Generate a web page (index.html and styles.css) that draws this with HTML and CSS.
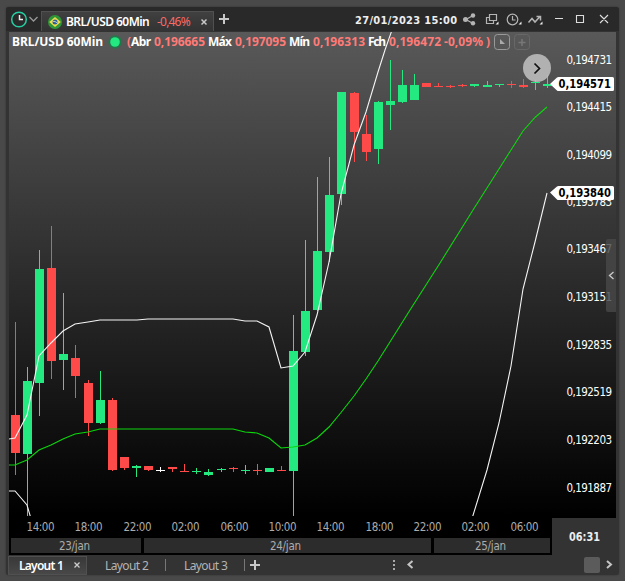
FILE: index.html
```
<!DOCTYPE html>
<html lang="pt">
<head>
<meta charset="utf-8">
<title>BRL/USD 60Min</title>
<link rel="stylesheet" href="styles.css">
</head>
<body>
<main class="window">
  <header class="titlebar">
    <svg class="clock" width="34" height="24" viewBox="6 8 34 24" fill="none">
      <circle cx="19" cy="20.500" r="7.300" stroke="#25cda3" stroke-width="1.500"/>
      <path d="M19.500 16v4.500H23" stroke="#eee" stroke-width="1.500"/>
      <path d="M29.500 18l4 4 4-4" stroke="#999" stroke-width="1.300"/>
    </svg>
    <div class="symbol-tab">
      <svg class="flag" width="14" height="14" viewBox="0 0 14 14">
        <circle cx="7" cy="7" r="7" fill="#2f9638"/>
        <path d="M7 2L12.800 7 7 12 1.200 7z" fill="#f0dc4a"/>
        <circle cx="7" cy="7" r="2.500" fill="#315f9c"/>
        <path d="M4.800 6.300q2.500-.3 4.400 1.600" stroke="#dce8d8" stroke-width=".8" fill="none"/>
      </svg>
      <span class="symbol">BRL/USD 60Min</span>
      <span class="change">-0,46%</span>
      <svg class="tab-close" width="8" height="8" viewBox="0 0 8 8"><path d="M1.500 1.500l5 5m0-5l-5 5" stroke="#c8c8c8" stroke-width="1.500"/></svg>
    </div>
    <svg class="add" width="12" height="12" viewBox="0 0 12 12"><path d="M6 1v10M1 6h10" stroke="#c8c8c8" stroke-width="2"/></svg>
    <span class="date">27/01/2023 15:00</span>
    <svg class="tools" width="155" height="24" viewBox="461 7 155 24" fill="none" stroke="#b4b4b4" stroke-width="1.200">
      <path d="M473 15.500l-7 4 7 4"/>
      <g fill="#b4b4b4" stroke="none"><circle cx="473" cy="15.500" r="2.200"/><circle cx="465.500" cy="19.500" r="2.500"/><circle cx="473" cy="23.200" r="2.200"/></g>
      <path d="M489.500 14.500h7v6h-7zM489.500 17.500h-3v6h7v-3"/>
      <circle cx="512.500" cy="19.500" r="5.300"/><path d="M512.500 16v4h3"/>
      <path d="M528.500 22.500l3.500-4 3 3.500 5-5.500M536.500 16.500h4v4" stroke-width="1.500"/>
      <path d="M498.500 21.500v3h-3zM521.500 21.500v3h-3zM542.500 21.500v3h-3z" fill="#eee" stroke="none"/>
      <path d="M555 18.500h8M576.500 15.500h7v7h-7zM600 15l8 8m0-8l-8 8" stroke="#ddd" stroke-width="1.100"/>
    </svg>
  </header>
  <svg class="chart" width="610" height="524" viewBox="9 31 610 524">
    <defs>
      <linearGradient id="sky" x1="0" y1="0" x2="0" y2="1"><stop stop-color="#595959"/><stop offset="1" stop-color="#000"/></linearGradient>
      <clipPath id="plot"><path d="M9 32h607v484H9z"/></clipPath>
    </defs>
    <path fill="#333" d="M9 31h610v524H9z"/>
    <path fill="url(#sky)" d="M9 32h607v484H9z"/>
    <path fill="#000" d="M9 516h607v2h-64v37H9z"/>
    <path fill="#2c2c2c" d="M11 538h130v15H11zM144 538h287v15H144zM434 538h116v15H434z"/>
    <g id="candles" shape-rendering="crispEdges"></g>
    <g class="bands" clip-path="url(#plot)">
      <polyline points="9,439 15,438 27,415 39,356 51,343 63,331 75,324 88,322 100,320 137,320 148,319 233,319 245,321 257,321 269,327 281,368 293,366 305,352 317,315 329,262 341,194 354,145 366,112 378,72 385,50 392,30"/>
      <polyline points="9,491 15,491 27,505 30.500,517"/>
      <polyline points="472.500,517 487,470 499,423 511,366 523,289 535,242 547,193"/>
      <polyline class="mid" points="9,465 15,465 27,460 39,450 51,445 63,439 75,434 88,432 100,429 233,429 245,432 257,433 269,438 281,448 293,447 305,445 317,438 329,427 341,412.500 354,396 366,379 378,361 410,310 440,263 473,210 487,188 511,150 523,131 535,117.500 547,107"/>
    </g>
    <g class="legend">
      <text x="12" y="46" textLength="91">BRL/USD 60Min</text>
      <circle cx="115" cy="42" r="6.700" fill="#26744b"/><circle cx="115" cy="42" r="4.800" fill="#24e880"/>
      <text class="neg" x="127" y="46">(</text><text x="131" y="46" textLength="20">Abr</text>
      <text class="neg" x="154" y="46" textLength="51">0,196665</text><text x="208" y="46" textLength="24">Máx</text>
      <text class="neg" x="235" y="46" textLength="51">0,197095</text><text x="289" y="46" textLength="21">Mín</text>
      <text class="neg" x="313" y="46" textLength="52">0,196313</text><text x="368" y="46" textLength="18">Fch</text>
      <text class="neg" x="389" y="46" textLength="52">0,196472</text><text class="neg" x="444" y="46" textLength="39">-0,09%</text><text class="neg" x="486" y="46">)</text>
    </g>
    <rect x="494.500" y="34.500" width="15" height="15" rx="3" fill="none" stroke="#999"/>
    <path d="M500 39v5h5z" fill="#aaa"/>
    <rect x="514.500" y="34.500" width="15" height="15" rx="3" fill="none" stroke="#686868"/>
    <path d="M522 39v7M518.500 42.500h7" stroke="#777" stroke-width="1.500"/>
    <g id="prices" class="axis"></g>
    <g id="times" class="axis times"></g>
    <g class="axis times">
      <text x="59" y="550" textLength="31">23/jan</text><text x="270" y="550" textLength="31">24/jan</text><text x="475" y="550" textLength="31">25/jan</text>
    </g>
    <path fill="#fff" d="M550 84l7-6.500q.5-.5 1.500-.5h54q1.500 0 1.500 1.500v11q0 1.500-1.500 1.500h-54q-1 0-1.500-.5z"/>
    <path fill="#fff" d="M550 192.500l7-6q.5-.5 1.500-.5h54q1.500 0 1.500 1.500v11q0 1.500-1.500 1.500h-54q-1 0-1.500-.5z"/>
    <g class="tag"><text x="558.500" y="88" textLength="52.500" lengthAdjust="spacingAndGlyphs">0,194571</text><text x="558.500" y="197" textLength="52.500" lengthAdjust="spacingAndGlyphs">0,193840</text></g>
    <circle cx="537" cy="68" r="14" fill="#bebebe" fill-opacity=".88"/>
    <path d="M534.500 63.500l5 5-5 5" fill="none" stroke="#111" stroke-width="1.700"/>
    <path d="M606 241q0-2 2-2h8v73h-8q-2 0-2-2z" fill="#484848" fill-opacity=".82"/>
    <path d="M613.500 272l-4 3.500 4 3.500" fill="none" stroke="#ccc" stroke-width="1.300"/>
    <text class="countdown" x="569" y="541" textLength="31" lengthAdjust="spacingAndGlyphs">06:31</text>
  </svg>
  <footer class="layouts">
    <div class="layout active"><span>Layout 1</span><svg width="8" height="8" viewBox="0 0 8 8"><path d="M1.500 1.500l5 5m0-5l-5 5" stroke="#ccc" stroke-width="1.300"/></svg></div>
    <div class="layout"><span>Layout 2</span></div>
    <div class="layout"><span>Layout 3</span></div>
    <svg class="add-layout" width="10" height="10" viewBox="0 0 10 10"><path d="M5 0v10M0 5h10" stroke="#c8c8c8" stroke-width="2"/></svg>
    <svg class="scroll" width="230" height="20" viewBox="389 555 230 20">
      <path d="M393 560h2v2h-2zM393 564h2v2h-2zM393 568h2v2h-2z" fill="#aaa"/>
      <rect x="584" y="557" width="16" height="16" rx="2" fill="#5b5b5b"/>
      <path d="M412.500 561l-4 3.500 4 3.500M607 561l4 3.500-4 3.500" fill="none" stroke="#c4c4c4" stroke-width="2"/>
    </svg>
  </footer>
</main>
<script src="chart.js"></script>
</body>
</html>
```
FILE: styles.css
```
* { box-sizing: border-box; }
body {
  margin: 0;
  height: 581px;
  overflow: hidden;
  padding: 7px 6px 6px;
  background: #494949;
  font-family: "Noto Sans", "Open Sans", sans-serif;
  font-size: 12px;
  color: #fff;
}
.window {
  width: 613px;
  height: 568px;
  background: #333;
  border-radius: 3px;
  display: flex;
  flex-direction: column;
  overflow: hidden;
  box-shadow: 0 0 2px #303030;
}
.titlebar {
  height: 24px;
  background: #292929;
  display: flex;
  align-items: center;
}
.clock { flex: none; margin-right: 1px; }
.symbol-tab {
  width: 173px;
  height: 20px;
  align-self: flex-end;
  flex: none;
  display: flex;
  align-items: center;
  padding: 1px 5px 0 6px;
  background: linear-gradient(#404040, #333);
  border: 1px solid #505050;
  border-bottom: 0;
}
.flag { flex: none; margin-right: 4px; }
.symbol, .change { white-space: nowrap; flex: none; line-height: 16px; }
.symbol { font-weight: 600; width: 91px; letter-spacing: -.55px; }
.change { color: #f96a66; letter-spacing: -.8px; }
.tab-close { margin-left: auto; flex: none; }
.add { margin-left: 4px; flex: none; }
.date {
  margin-left: 125px;
  width: 106px;
  white-space: nowrap;
  font: bold 11px/24px "DejaVu Sans Condensed", "DejaVu Sans", sans-serif;
  letter-spacing: .32px;
  color: #eee;
  padding-top: 4px;
}
.tools { flex: none; }
.chart { flex: none; margin-left: 3px; display: block; }
.bands polyline { fill: none; stroke: #f4f4f4; stroke-width: 1.1; }
.bands .mid { stroke: #0cd60c; }
.up { fill: #24e880; }
.down { fill: #ff4a4a; }
.flat { fill: #fff; }
.legend { font-weight: 700; fill: #fff; }
.legend .neg { fill: #ff7b78; }
.axis { font: 11.5px "DejaVu Sans Condensed", "DejaVu Sans", sans-serif; fill: #fff; }
.times { fill: #acacac; }
.tag { font: bold 11.5px "DejaVu Sans Condensed", "DejaVu Sans", sans-serif; fill: #000; }
.countdown { font: bold 11.5px "DejaVu Sans Condensed", "DejaVu Sans", sans-serif; fill: #eee; }
.layouts {
  height: 20px;
  display: flex;
  align-items: center;
  padding-left: 2px;
}
.layout {
  display: flex;
  align-items: center;
  height: 12px;
  width: 79px;
  padding-left: 18px;
  border-right: 1px solid #777;
  color: #b4b4b4;
  white-space: nowrap;
  letter-spacing: -.6px;
}
.layout.active {
  height: 19px;
  padding-left: 10px;
  justify-content: space-between;
  padding-right: 5px;
  color: #fff;
  font-weight: 600;
  letter-spacing: -.75px;
  background: linear-gradient(#383838, #484848);
  border: 1px solid #505050;
}
.add-layout { margin-left: 5px; }
.scroll { margin-left: auto; }
```
FILE: chart.js
```
// Center x, high, low, body top, body bottom, direction.
const candles = [
  [15,322,475,415,453,'down'],[27,367,516,381,454,'up'],[39,250,416,269,383,'up'],
  [51,226,379,268,361,'down'],[63,293,390,354,360,'up'],[75,345,398,358,376,'down'],
  [88,380,436,383,423,'down'],[100,371,424,400,423,'up'],[112,398,471,400,470,'down'],
  [124,457,470,457,468,'down'],[136,465,477,466,468,'up'],[148,466,471,466,470,'down'],
  [160,467,472,470,471,'flat'],[172,467,472,467,469,'down'],[184,464,472,471,472,'down'],
  [196,468,474,471,472,'up'],[208,469,476,472,475,'up'],[221,468,472,469,470,'up'],
  [233,467,472,468,469,'down'],[245,465,474,470,471,'up'],[257,464,475,470,471,'down'],
  [269,468,472,468,472,'up'],[281,466,471,470,471,'down'],[293,315,516,351,471,'up'],
  [305,240,356,311,352,'up'],[317,177,311,251,310,'up'],[329,157,262,195,252,'up'],
  [341,92,205,92,194,'up'],[354,92,162,93,132,'down'],[366,115,161,134,152,'down'],
  [378,101,164,102,149,'up'],[390,60,130,101,105,'up'],[402,70,103,85,102,'up'],
  [414,74,100,85,100,'up'],[426,83,87,83,87,'down'],[438,83,87,86,87,'down'],
  [450,85,88,86,87,'down'],[462,84,87,85,86,'down'],[474,84,87,84,86,'up'],
  [487,81,87,85,87,'up'],[499,84,87,84,85,'up'],[511,81,88,84,85,'down'],
  [523,79,88,85,87,'down'],[535,80,90,82,83,'up'],[547,75,88,84,86,'up']
];
document.getElementById('candles').innerHTML = candles.map(([x, h, l, t, b, c]) =>
  `<path class="${c}" d="M${x} ${h}h1V${l}h-1zM${x - 4} ${t}h9V${b}h-9z"/>`).join('');

const prices = [['0,194731',60],['0,194415',107],['0,194099',155],['0,193783',202],['0,193467',249],
  ['0,193151',297],['0,192835',345],['0,192519',392],['0,192203',440],['0,191887',488]];
document.getElementById('prices').innerHTML = prices.map(([p, y]) =>
  `<text x="566.500" y="${y + 4}" textLength="45.500">${p}</text>`).join('');

const times = [['14:00',40],['18:00',88],['22:00',137],['02:00',185],['06:00',234],['10:00',282],
  ['14:00',330],['18:00',379],['22:00',427],['02:00',475],['06:00',524]];
document.getElementById('times').innerHTML = times.map(([t, x]) =>
  `<text x="${x - 13.5}" y="531" textLength="28">${t}</text>`).join('');
```
